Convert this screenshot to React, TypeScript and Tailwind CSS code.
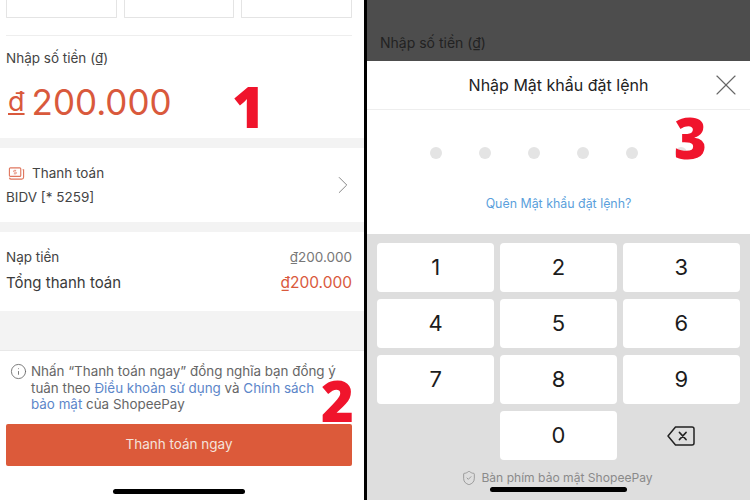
import { ChevronRight, Info, ShieldCheck, X } from "lucide-react";

const keys = ["1", "2", "3", "4", "5", "6", "7", "8", "9"];
const font = "font-['Inter','Noto_Sans',sans-serif]";
const mark = "absolute font-['Open_Sans',sans-serif] font-extrabold leading-none text-[#f0142c]";

function PaymentPanel() {
  return (
    <div className="relative flex h-[500px] w-[364px] flex-none flex-col bg-white">
      <div className="flex h-[18px] gap-[7px] pl-[6px] pr-[12px]">
        <div className="flex-1 rounded-b-[1px] border border-t-0 border-[#e4e4e4]" />
        <div className="flex-1 rounded-b-[1px] border border-t-0 border-[#e4e4e4]" />
        <div className="flex-1 rounded-b-[1px] border border-t-0 border-[#e4e4e4]" />
      </div>
      <div className="mx-[6px] mr-[12px] mt-[17px] h-px bg-[#eeeeee]" />

      <div className="h-[102px] px-[6px]">
        <p className="mt-[14px] text-[13.5px] leading-4 text-[#444444]">Nhập số tiền (₫)</p>
        <div className="ml-[2px] mt-[16px] flex items-center gap-[7px] text-[#d9593c]">
          <span className="text-[27px] leading-10 underline decoration-2 underline-offset-2">đ</span>
          <span className="text-[35px] leading-10">200.000</span>
        </div>
      </div>

      <div className="h-[10px] bg-[#f3f3f3]" />

      <div className="flex h-[74px] items-center justify-between pl-[6px] pr-[6px]">
        <div>
          <div className="flex items-center gap-[7px] pl-[2px]">
            <svg viewBox="0 0 18 15" className="h-[15px] w-[17px] text-[#e0775f]" fill="none" stroke="currentColor" strokeWidth="1.2">
              <rect x="1.5" y="1.5" width="12" height="9" rx="1" />
              <path d="M15.5 3.5h1v8a2 2 0 0 1-2 2h-11a2 2 0 0 1-2-1.5" />
              <path d="M8.6 4.2H6.8a.9.9 0 0 0 0 1.8h1.2a.9.9 0 0 1 0 1.8H6.2" strokeWidth="0.9" />
            </svg>
            <span className="text-[13.5px] leading-5 text-[#444444]">Thanh toán</span>
          </div>
          <p className="mt-[4px] text-[13.5px] leading-5 text-[#444444]">BIDV [* 5259]</p>
        </div>
        <ChevronRight className="h-[30px] w-[30px] text-[#888888]" strokeWidth={0.8} />
      </div>

      <div className="h-[10px] bg-[#f3f3f3]" />

      <div className="h-[79px] pl-[6px] pr-[12px] pt-[15px]">
        <div className="flex items-center justify-between text-[13.5px] leading-5 text-[#444444]">
          <span>Nạp tiền</span>
          <span className="text-[#777777]">₫200.000</span>
        </div>
        <div className="mt-[6px] flex items-center justify-between text-[15px] leading-5 text-[#3a3a3a]">
          <span>Tổng thanh toán</span>
          <span className="text-[15.5px] text-[#d9593c]">₫200.000</span>
        </div>
      </div>

      <div className="h-[39px] bg-[#f3f3f3]" />

      <div className="flex flex-1 flex-col border-t border-[#e8e8e8] pl-[6px] pr-[12px]">
        <div className="mt-[12px] flex gap-[4px] pl-[4px]">
          <Info className="h-[17px] w-[17px] flex-none text-[#666666]" strokeWidth={1.2} />
          <p className="w-[308px] text-[13.4px] leading-[16.5px] text-[#666666]">
            Nhấn “Thanh toán ngay” đồng nghĩa bạn đồng ý tuân theo{" "}
            <span className="text-[#5c86c9]">Điều khoản sử dụng</span> và{" "}
            <span className="text-[#5c86c9]">Chính sách bảo mật</span> của ShopeePay
          </p>
        </div>
        <button className="mt-[11px] h-[42px] rounded-[2px] bg-[#dc5a3a] text-[13.5px] text-[#f5e3dc]">
          Thanh toán ngay
        </button>
        <div className="mt-[23px] h-[5px] w-[132px] self-center rounded-full bg-black" />
      </div>

      <span className={`${mark} left-[232px] top-[78px] text-[56px]`}>1</span>
      <span className={`${mark} left-[321px] top-[372px] text-[56px]`}>2</span>
    </div>
  );
}

function PasswordPanel() {
  return (
    <div className="relative flex h-[500px] flex-1 flex-col bg-[#dedede]">
      <div className="h-[61px] flex-none bg-[#4d4d4d] pl-[13px] pt-[35px]">
        <p className="text-[14px] leading-4 text-[#222222]">Nhập số tiền (₫)</p>
      </div>

      <div className="h-[173px] flex-none bg-white">
        <div className="flex h-[49px] items-center justify-center border-b border-[#eeeeee] text-[16px] text-[#222222]">
          Nhập Mật khẩu đặt lệnh
        </div>
        <div className="mt-[37px] flex justify-center gap-[37px]">
          {[0, 1, 2, 3, 4, 5].map((i) => (
            <span key={i} className="h-3 w-3 rounded-full bg-[#e4e4e4]" />
          ))}
        </div>
        <p className="mt-[37px] text-center text-[12.4px] leading-4 text-[#5b9fdc]">Quên Mật khẩu đặt lệnh?</p>
      </div>

      <div className="grid grid-cols-3 gap-x-[5.5px] gap-y-[7px] pl-[10px] pr-[10px] pt-[9px]">
        {keys.map((k) => (
          <div key={k} className="flex h-[49px] items-center justify-center rounded-[4px] bg-white text-[22px] text-[#1c1c1c]">
            {k}
          </div>
        ))}
        <div />
        <div className="flex h-[49px] items-center justify-center rounded-[4px] bg-white text-[22px] text-[#1c1c1c]">0</div>
        <div className="flex items-center justify-center">
          <svg viewBox="0 0 28 20" className="h-[20px] w-[28px] text-[#222222]" fill="none" stroke="currentColor" strokeWidth="1.5" strokeLinejoin="round" strokeLinecap="round">
            <path d="M8.5 1h16.5a2 2 0 0 1 2 2v14a2 2 0 0 1-2 2H8.5L1 10z" />
            <path d="M12.5 6.5l6.5 7M19 6.5l-6.5 7" strokeWidth="1.8" />
          </svg>
        </div>
      </div>

      <div className="mt-[10px] flex items-center justify-center gap-[4px] pr-[3px] text-[12.1px] leading-4 text-[#8a8a8a]">
        <ShieldCheck className="h-[16px] w-[16px]" strokeWidth={1.2} />
        <span>Bàn phím bảo mật ShopeePay</span>
      </div>
      <div className="mt-[1px] h-[5px] w-[137px] self-center rounded-full bg-black" />

      <X className="absolute left-[341px] top-[67px] h-[36px] w-[36px] text-[#666666]" strokeWidth={0.75} />
      <span className={`${mark} left-[307px] top-[109px] text-[56px]`}>3</span>
    </div>
  );
}

export default function App() {
  return (
    <div className={`flex h-[500px] w-[750px] overflow-hidden bg-black ${font}`}>
      <PaymentPanel />
      <div className="w-[3px] flex-none bg-black" />
      <PasswordPanel />
    </div>
  );
}
